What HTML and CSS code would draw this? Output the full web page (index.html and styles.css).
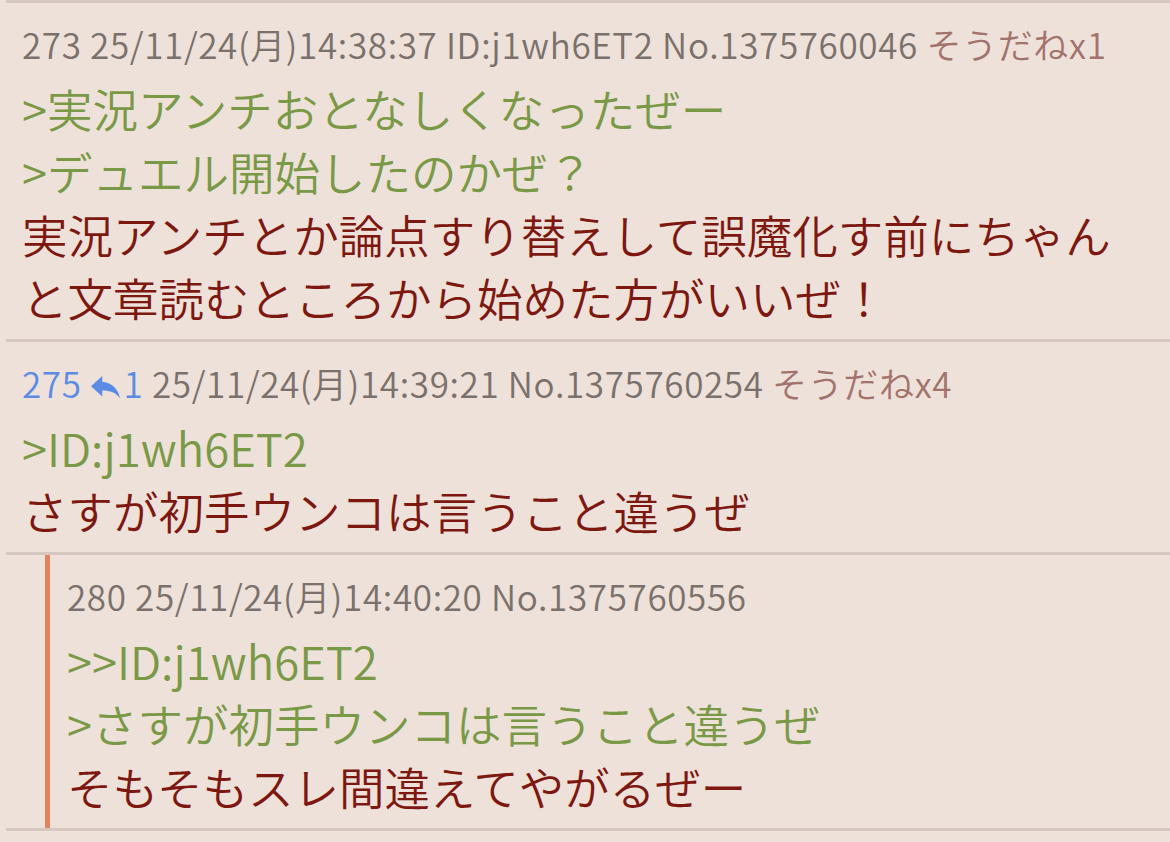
FILE: index.html
```html
<!DOCTYPE html>
<html lang="ja">
<head>
    <meta charset="UTF-8">
    <meta name="viewport" content="width=device-width, initial-scale=1.0">
    <title>スレッド</title>
    <link rel="stylesheet" href="styles.css">
</head>
<body>
    <div class="thread">
        <!-- 273 -->
        <div class="res">
            <div class="post">
                <div class="post-head">273 25/11/24(月)14:38:37 ID:j1wh6ET2 No.1375760046 <span class="sod">そうだねx1</span></div>
                <div class="post-body">
                    <div class="quote">&gt;実況アンチおとなしくなったぜー</div>
                    <div class="quote">&gt;デュエル開始したのかぜ？</div>
                    <div>実況アンチとか論点すり替えして誤魔化す前にちゃんと文章読むところから始めた方がいいぜ！</div>
                </div>
            </div>
        </div>

        <!-- 275 -->
        <div class="res">
            <div class="post">
                <div class="post-head"><span class="num">275<svg class="reply-icon" viewBox="3 5 18 15" preserveAspectRatio="none"><path d="M10 9V5l-7 7 7 7v-4.1c5 0 8.5 1.6 11 5.1-1-5-4-10-11-11z"/></svg>1</span> 25/11/24(月)14:39:21 No.1375760254 <span class="sod">そうだねx4</span></div>
                <div class="post-body">
                    <div class="quote">&gt;ID:j1wh6ET2</div>
                    <div>さすが初手ウンコは言うこと違うぜ</div>
                </div>
            </div>
        </div>

        <!-- 280 (reply to 275) -->
        <div class="res">
            <div class="post post-reply">
                <div class="post-head">280 25/11/24(月)14:40:20 No.1375760556</div>
                <div class="post-body">
                    <div class="quote">&gt;&gt;ID:j1wh6ET2</div>
                    <div class="quote">&gt;さすが初手ウンコは言うこと違うぜ</div>
                    <div>そもそもスレ間違えてやがるぜー</div>
                </div>
            </div>
        </div>
    </div>
</body>
</html>
```

FILE: styles.css
```css
body {
    margin: 0;
    background-color: #ede1d9;
    font-family: "Noto Sans CJK JP", "Noto Sans", sans-serif;
    font-weight: 350;
}
.thread {
    margin-left: 6px;
    border-top: 3px solid #d6c8c1;
}
.res {
    border-bottom: 3px solid #d6c8c1;
}
.post {
    padding: 19px 20px 10px 16px;
}
.post-reply {
    margin-left: 39px;
    border-left: 5px solid #e4825c;
    padding-left: 17px;
}
.post-head {
    font-size: 35px;
    line-height: 44px;
    letter-spacing: 0.65px;
    color: #7b716c;
    margin-bottom: 11px;
    white-space: nowrap;
}
.sod {
    color: #a2736c;
}
.num {
    color: #5b8be4;
}
.reply-icon {
    width: 29px;
    height: 22px;
    fill: #5b8be4;
    vertical-align: 0;
    margin: 0 4px 0 9px;
}
.post-body {
    font-size: 45.5px;
    line-height: 63px;
    color: #7d1811;
}
.quote {
    color: #7a9947;
}
```
